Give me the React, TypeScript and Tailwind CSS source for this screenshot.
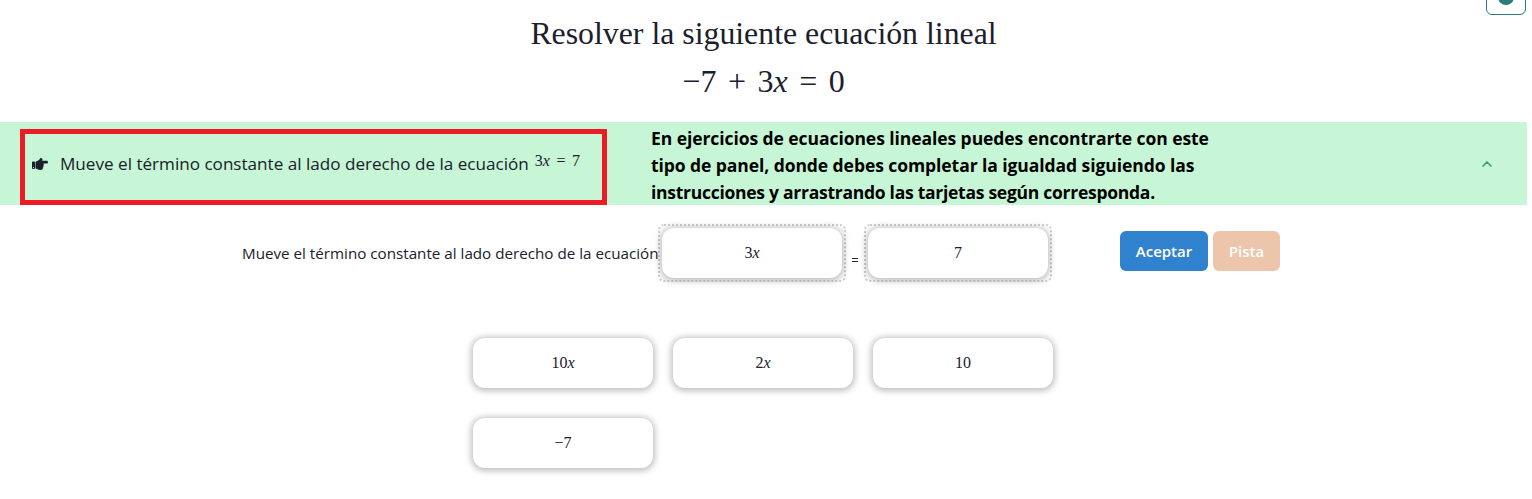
import { ChevronUp } from 'lucide-react'
import { FaHandPointRight } from 'react-icons/fa'

const SERIF = "font-['Liberation_Serif',serif]"
const SANS = "font-['Open_Sans',sans-serif]"

function Var() {
  return <span className="italic">x</span>
}

/** Answer card, shown in the drop zones and in the tray */
function Card({ children }: { children: React.ReactNode }) {
  return (
    <div className={`${SERIF} flex h-[50px] w-[180px] items-center justify-center rounded-xl bg-white text-[16px] text-[#1a202c] shadow-[0_1px_6px_2px_rgba(0,0,0,0.25)]`}>
      {children}
    </div>
  )
}

function DropZone({ children }: { children: React.ReactNode }) {
  return (
    <div className="rounded-md border-2 border-dotted border-[#cfcfcf] p-[2px]">
      {children}
    </div>
  )
}

export default function App() {
  return (
    <div className="relative h-[499px] w-[1532px] overflow-hidden bg-white text-[#1a202c]">
      {/* Help button, cut off by the top of the page */}
      <div className="absolute -top-6 left-[1486px] flex h-[39px] w-[40px] items-center justify-center rounded-md border border-[#2c7a7b]">
        <div className="mt-[3px] h-4 w-4 rounded-full bg-[#2c7a7b]" />
      </div>

      {/* Heading */}
      <div className={`${SERIF} flex h-[122px] w-[1527px] flex-col items-center pt-[14px] text-[#1a202c]`}>
        <h1 className="text-[31.8px] leading-[40px]">Resolver la siguiente ecuación lineal</h1>
        <p className="mt-[7px] text-[32px] leading-[40px] [word-spacing:3.5px]">
          −7 + 3<Var /> = 0
        </p>
      </div>

      {/* Instruction panel */}
      <div className="flex h-[83px] w-[1527px] items-end bg-[#c6f6d5] pl-5">
        <div className="flex h-[76px] w-[587px] shrink-0 items-center border-[5px] border-[#ed1c24] pb-[6px] pl-[7px]">
          <FaHandPointRight className="h-4 w-4 shrink-0 text-[#1a202c]" />
          <span className={`${SANS} ml-3 whitespace-nowrap text-[17.1px]`}>
            Mueve el término constante al lado derecho de la ecuación
          </span>
          <span className={`${SERIF} mb-[6px] ml-[6px] whitespace-nowrap text-[16px] [word-spacing:2.5px]`}>
            3<Var /> = 7
          </span>
        </div>
        <p className={`${SANS} mb-[-1px] ml-[44px] w-[600px] shrink-0 text-[17.5px] font-bold leading-[27px] text-black`}>
          <span className="tracking-[-0.07px]">En ejercicios de ecuaciones lineales puedes encontrarte con este</span>
          <br />
          <span className="tracking-[-0.07px]">tipo de panel, donde debes completar la igualdad siguiendo las</span>
          <br />
          <span className="tracking-[-0.27px]">instrucciones y arrastrando las tarjetas según corresponda.</span>
        </p>
        <ChevronUp className="mb-[33px] ml-[228px] h-4 w-4 shrink-0 text-[#38a169]" strokeWidth={2.5} />
      </div>

      {/* Equation row */}
      <div className="mt-[19px] flex items-center pl-[242px]">
        <span className={`${SANS} w-[416px] shrink-0 whitespace-nowrap text-[15.2px]`}>
          Mueve el término constante al lado derecho de la ecuación
        </span>
        <DropZone>
          <Card>
            3<Var />
          </Card>
        </DropZone>
        <span className={`${SANS} mx-[4px] mt-4 w-[10px] text-center text-[13px]`}>=</span>
        <DropZone>
          <Card>7</Card>
        </DropZone>
        <div className="mb-1 ml-[68px] flex gap-[5px]">
          <button className={`${SANS} h-10 w-[88px] rounded-md bg-[#3182ce] text-[15px] font-semibold text-white`}>
            Aceptar
          </button>
          <button className={`${SANS} h-10 w-[67px] rounded-md bg-[#edc5aa] text-[15px] font-semibold text-white`}>
            Pista
          </button>
        </div>
      </div>

      {/* Card tray */}
      <div className="mt-[56px] ml-[473px] grid w-[580px] grid-cols-3 gap-x-5 gap-y-[30px]">
        <Card>
          10<Var />
        </Card>
        <Card>
          2<Var />
        </Card>
        <Card>10</Card>
        <Card>−7</Card>
      </div>
    </div>
  )
}
